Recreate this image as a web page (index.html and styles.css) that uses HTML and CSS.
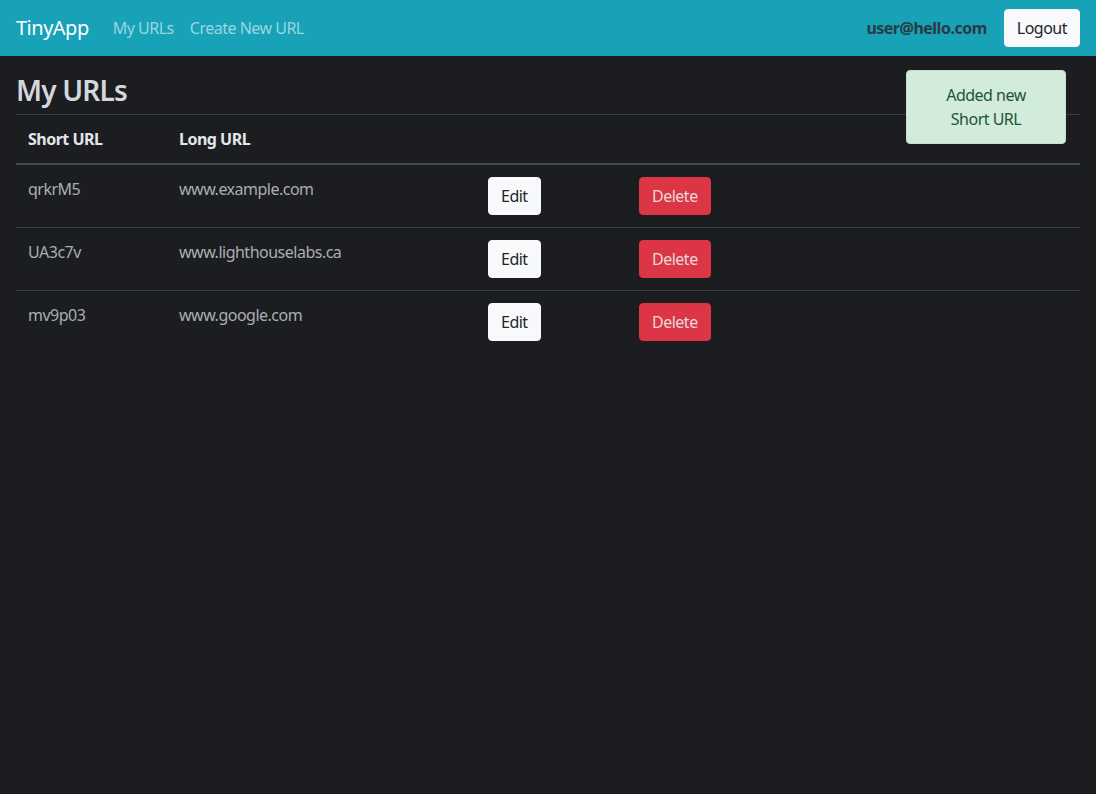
FILE: index.html
```html
<!DOCTYPE html>
<html lang="en">
<head>
<meta charset="utf-8">
<title>TinyApp</title>
<link rel="stylesheet" href="styles.css">
</head>
<body>
<nav class="navbar">
  <a class="brand" href="#">TinyApp</a>
  <div class="nav-links">
    <a href="#">My URLs</a>
    <a href="#">Create New URL</a>
  </div>
  <div class="nav-right">
    <span class="user">user@hello.com</span>
    <button class="btn btn-light">Logout</button>
  </div>
</nav>
<main class="container">
  <div class="alert">Added new<br>Short URL</div>
  <h1>My URLs</h1>
  <table class="table">
    <thead>
      <tr><th class="c1">Short URL</th><th class="c2">Long URL</th><th class="c3"></th><th></th></tr>
    </thead>
    <tbody>
      <tr><td>qrkrM5</td><td>www.example.com</td><td><button class="btn btn-light">Edit</button></td><td><button class="btn btn-danger">Delete</button></td></tr>
      <tr><td>UA3c7v</td><td>www.lighthouselabs.ca</td><td><button class="btn btn-light">Edit</button></td><td><button class="btn btn-danger">Delete</button></td></tr>
      <tr><td>mv9p03</td><td>www.google.com</td><td><button class="btn btn-light">Edit</button></td><td><button class="btn btn-danger">Delete</button></td></tr>
    </tbody>
  </table>
</main>
</body>
</html>
```
FILE: styles.css
```css
* { box-sizing: border-box; }
html, body { margin: 0; padding: 0; }
body {
  background: #1b1d21;
  color: #dee2e6;
  font-family: "Noto Sans", "Open Sans", sans-serif;
  font-size: 16px;
  line-height: 24px;
  letter-spacing: -0.5px;
  height: 794px;
}
a { text-decoration: none; }
.navbar {
  height: 56px;
  background: #17a2b8;
  display: flex;
  align-items: center;
  padding: 0 16px;
}
.brand {
  color: #fff;
  font-size: 20px;
  line-height: 30px;
  margin-right: 16px;
}
.nav-links { display: flex; }
.nav-links a {
  color: #9ad6e0;
  padding: 8px;
}
.nav-right {
  margin-left: auto;
  display: flex;
  align-items: center;
  gap: 17px;
}
.user {
  color: #2b3a3f;
  font-weight: 700;
}
.btn {
  font-family: inherit;
  font-size: 16px;
  line-height: 24px;
  letter-spacing: -0.5px;
  padding: 6px 12px;
  border-radius: 4px;
  border: 1px solid transparent;
  cursor: pointer;
}
.btn-light { background: #f8f9fa; color: #212529; border-color: #f8f9fa; }
.btn-danger { background: #dc3545; color: #e6dada; border-color: #dc3545; }
.container {
  padding: 0 16px;
  position: relative;
}
h1 {
  margin: 0;
  padding-top: 14px;
  padding-bottom: 4px;
  font-size: 28px;
  line-height: 40px;
  font-weight: 600;
  letter-spacing: -0.8px;
  color: #d4d8dc;
}
.alert {
  position: absolute;
  top: 14px;
  right: 30px;
  width: 160px;
  background: #d3ebdb;
  color: #1a5634;
  border: 1px solid #c4e1ce;
  border-radius: 4px;
  padding: 12px;
  text-align: center;
}
.table {
  width: 100%;
  border-collapse: collapse;
  border-top: 1px solid #3a3d42;
}
.table th, .table td {
  padding: 12px;
  text-align: left;
  vertical-align: top;
  border-bottom: 1px solid #3a3d42;
}
.table tbody tr:last-child td { border-bottom: 0; }
.table th { color: #e3e6ea; font-weight: 700; }
.table td { color: #a9aeb4; }
.table thead th { border-bottom: 2px solid #45484d; }
.c1 { width: 151px; }
.c2 { width: 309px; }
.c3 { width: 151px; }
```
